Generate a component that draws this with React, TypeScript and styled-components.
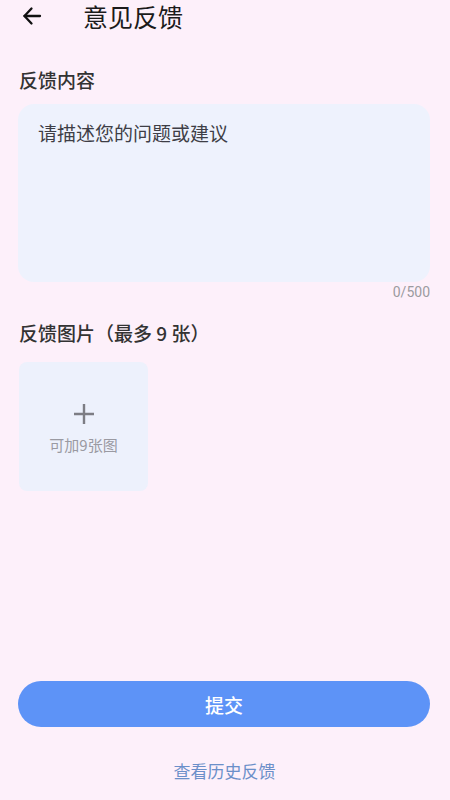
import React from "react";
import styled, { createGlobalStyle } from "styled-components";

const Global = createGlobalStyle`
  html, body { margin: 0; padding: 0; background: #fdf0fa; }
  body { font-family: "Noto Sans CJK SC", "Noto Sans", sans-serif; }
  * { box-sizing: border-box; }
`;

const Page = styled.div`
  width: 450px;
  height: 800px;
  display: flex;
  flex-direction: column;
  background: #fdf0fa;
  overflow: hidden;
`;

const Header = styled.div`
  height: 31px;
  padding-top: 2px;
  display: flex;
  align-items: center;
  padding-left: 21px;
  gap: 40px;
`;

const BackButton = styled.button`
  border: none;
  background: none;
  padding: 0;
  width: 22px;
  height: 22px;
  display: flex;
  align-items: center;
  justify-content: center;
  color: #111;
  margin-top: -2px;
`;

const Title = styled.h1`
  margin: 0;
  font-size: 25px;
  font-weight: 400;
  color: #1b1b1b;
  line-height: 29px;
`;

const Content = styled.div`
  flex: 1;
  display: flex;
  flex-direction: column;
  padding: 0 20px 0 18px;
`;

const SectionLabel = styled.div<{ $top: number }>`
  margin-top: ${(p) => p.$top}px;
  padding-left: 1px;
  font-size: 19px;
  font-weight: 500;
  color: #333;
  line-height: 26px;
`;

const TextArea = styled.textarea`
  margin-top: 11px;
  width: 412px;
  height: 178px;
  border: none;
  outline: none;
  resize: none;
  border-radius: 16px;
  background: #eef2fd;
  padding: 16px 20px;
  font-family: "Noto Sans CJK SC", "Noto Sans", sans-serif;
  font-size: 19px;
  line-height: 26px;
  color: #333;
  &::placeholder { color: #3e3e46; }
`;

const Counter = styled.div`
  width: 412px;
  text-align: right;
  font-family: "Roboto", "Noto Sans", sans-serif;
  font-size: 14px;
  color: #9b9b9f;
  line-height: 20px;
`;

const ImageGrid = styled.div`
  margin-top: 16px;
  display: flex;
  padding-left: 1px;
`;

const AddTile = styled.div`
  width: 129px;
  height: 129px;
  border-radius: 8px;
  background: #edf1fc;
  display: flex;
  flex-direction: column;
  align-items: center;
  justify-content: center;
  gap: 10px;
  padding-top: 4px;
`;

const TileText = styled.div`
  font-size: 15px;
  color: #9a9aa2;
  line-height: 20px;
`;

const Spacer = styled.div`
  flex: 1;
`;

const SubmitButton = styled.button`
  height: 46px;
  width: 412px;
  border: none;
  border-radius: 23px;
  background: #5d93f7;
  color: #fff;
  font-family: "Noto Sans CJK SC", "Noto Sans", sans-serif;
  font-size: 19px;
  font-weight: 500;
  display: flex;
  align-items: center;
  justify-content: center;
`;

const HistoryLink = styled.div`
  margin-top: 32px;
  margin-bottom: 17px;
  text-align: center;
  font-size: 17px;
  color: #6b8fc9;
  line-height: 24px;
  padding-left: 1px;
`;

export default function App() {
  return (
    <>
      <Global />
      <Page>
        <Header>
          <BackButton aria-label="back">
            <svg width="20" height="20" viewBox="0 0 20 20" fill="none" stroke="#111" strokeWidth="2.3" strokeLinecap="round" strokeLinejoin="round">
              <path d="M18 10H2.5" />
              <path d="M9.5 2.5L2.5 10l7 7.5" />
            </svg>
          </BackButton>
          <Title>意见反馈</Title>
        </Header>
        <Content>
          <SectionLabel $top={36}>反馈内容</SectionLabel>
          <TextArea placeholder="请描述您的问题或建议" />
          <Counter>0/500</Counter>
          <SectionLabel $top={18}>反馈图片（最多 9 张）</SectionLabel>
          <ImageGrid>
            <AddTile>
              <svg width="22" height="22" viewBox="0 0 22 22" stroke="#7d7d84" strokeWidth="2.4">
                <path d="M11 1v20M1 11h20" />
              </svg>
              <TileText>可加9张图</TileText>
            </AddTile>
          </ImageGrid>
          <Spacer />
          <SubmitButton>提交</SubmitButton>
          <HistoryLink>查看历史反馈</HistoryLink>
        </Content>
      </Page>
    </>
  );
}
